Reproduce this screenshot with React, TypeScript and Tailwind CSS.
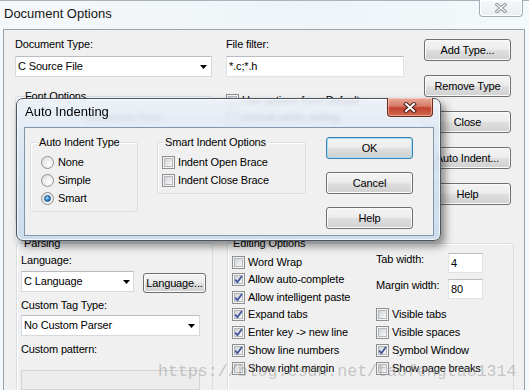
import React from "react";

const F = "font-['Liberation_Sans',Arial,sans-serif]";

function Btn({ label, w = "w-[87px]", h = "h-[22px]", def = false, className = "" }: { label: string; w?: string; h?: string; def?: boolean; className?: string }) {
  return (
    <div
      className={`${w} ${h} shrink-0 flex items-center justify-center rounded-[3px] border ${
        def ? "border-[#3c7fb1] shadow-[inset_0_0_0_1px_#a6e0f8]" : "border-[#707070] shadow-[inset_0_0_0_1px_#fbfbfb]"
      } bg-[linear-gradient(180deg,#f4f4f4_0%,#ececec_46%,#dedede_54%,#d0d0d0_100%)] text-black ${className}`}
    >
      {label}
    </div>
  );
}

function Check({ checked = false }: { checked?: boolean }) {
  return (
    <div className="relative w-[13px] h-[13px] shrink-0 border border-[#8e8f8f] bg-[#f4f4f4] p-[1px]">
      <div className="w-full h-full border border-[#b4b8bd] bg-[linear-gradient(135deg,#d0d3d7,#f8f8f8)]" />
      {checked && (
        <svg className="absolute left-0 top-0" width="11" height="11" viewBox="0 0 11 11">
          <path d="M2.2 5.6 L4.4 8.2 L8.9 2" fill="none" stroke="#4659a0" strokeWidth="1.9" strokeLinejoin="round" />
        </svg>
      )}
    </div>
  );
}

function Radio({ on = false }: { on?: boolean }) {
  return (
    <div className="w-[13px] h-[13px] shrink-0 rounded-full border border-[#8e8f8f] bg-[radial-gradient(circle_at_65%_65%,#ffffff,#d6d9dd)] flex items-center justify-center">
      {on && (
        <div className="w-[7px] h-[7px] rounded-full border border-[#1d4f86] bg-[radial-gradient(circle_at_40%_35%,#a8e0ff,#2a86d6_55%,#0d4a8a)]" />
      )}
    </div>
  );
}

function Combo({ text, w, pr = "pr-[4px]" }: { text: string; w: string; pr?: string }) {
  return (
    <div className={`${w} h-[21px] shrink-0 flex items-center justify-between border border-[#d5d9de] border-t-[#b9bdc3] bg-white pl-[2px] ${pr}`}>
      <span className="whitespace-nowrap">{text}</span>
      <svg width="7" height="4" viewBox="0 0 7 4">
        <path d="M0 0H7L3.5 4Z" fill="#000" />
      </svg>
    </div>
  );
}

function TextBox({ text, w, h = "h-[21px]", disabled = false }: { text: string; w: string; h?: string; disabled?: boolean }) {
  return (
    <div
      className={`${w} ${h} shrink-0 flex items-center border ${
        disabled ? "border-[#d3d3d3] bg-[#ececec]" : "border-[#dfe3e8] border-t-[#b9bdc3] bg-white"
      } pl-[2px]`}
    >
      {text}
    </div>
  );
}

function Group({ label, className = "", labelLeft = "left-[6px]", children }: { label: string; className?: string; labelLeft?: string; children?: React.ReactNode }) {
  return (
    <div className={`relative shrink-0 rounded-[3px] border border-[#d5dfe5] shadow-[inset_1px_1px_0_#ffffff] ${className}`}>
      <span className={`absolute -top-[7px] ${labelLeft} px-[1px] bg-[#f0f0f0] leading-[13px] whitespace-nowrap`}>{label}</span>
      {children}
    </div>
  );
}

function CheckRow({ label, checked = false, h = "h-[18px]" }: { label: string; checked?: boolean; h?: string }) {
  return (
    <div className={`${h} flex items-center gap-[3px] whitespace-nowrap`}>
      <Check checked={checked} />
      <span>{label}</span>
    </div>
  );
}

export default function App() {
  return (
    <div
      className={`relative w-[529px] h-[390px] overflow-hidden bg-[linear-gradient(90deg,#f5f8fa,#eef4f8_60%,#f4f9fb)] ${F} text-[11px] tracking-[-0.15px] text-black`}
    >
      {/* Title bar */}
      <div className="flex items-start h-[29px] border-t border-[#a9b3bd]">
        <span className="ml-[4px] mt-[5px] text-[13px] leading-[15px] tracking-normal text-[#151515]">Document Options</span>
        <div className="ml-auto mr-[6px] w-[44px] h-[17px] -mt-[1px] flex items-center justify-center rounded-b-[4px] border border-t-0 border-[#a4adb6] bg-[linear-gradient(180deg,#f6f8fa,#e9eef2)] shadow-[inset_0_0_0_1px_#ffffff]">
          <svg width="12" height="10" viewBox="0 0 12 10">
            <path d="M2 1.5 L10 8.5 M10 1.5 L2 8.5" stroke="#8c939a" strokeWidth="3.4" strokeLinecap="square" />
            <path d="M2 1.5 L10 8.5 M10 1.5 L2 8.5" stroke="#f4f6f8" strokeWidth="1.4" strokeLinecap="square" />
          </svg>
        </div>
      </div>

      {/* Main panel */}
      <div className="ml-[3px] w-[522px] h-[361px] overflow-hidden border-x border-t border-[#97a2ad] bg-[#f0f0f0]">
        {/* top section */}
        <div className="flex h-[206px] pl-[11px]">
          <div className="w-[409px] pt-[8px]">
            <div className="flex gap-[14px]">
              <div className="w-[197px]">
                <div className="leading-[13px]">Document Type:</div>
                <div className="mt-[5px]">
                  <Combo text="C Source File" w="w-[197px]" />
                </div>
              </div>
              <div className="w-[178px]">
                <div className="leading-[13px]">File filter:</div>
                <div className="mt-[5px]">
                  <TextBox text="*.c;*.h" w="w-[178px]" />
                </div>
              </div>
            </div>
            <div className="flex items-start gap-[14px]">
              <Group label="Font Options" labelLeft="left-[8px]" className="w-[197px] h-[128px] mt-[19px]">
                <div className="pl-[8px] pt-[14px] flex flex-col gap-[4px] text-[#333]">
                  <div className="pl-[60px] leading-[13px]">Use printer fonts</div>
                  <div className="flex items-center gap-[4px]">
                    <Combo text="Courier New" w="w-[150px]" />
                  </div>
                </div>
              </Group>
              <div className="w-[178px] mt-[16px] flex flex-col gap-[3px]">
                <CheckRow label="Use options from Default" h="h-[14px]" />
                <CheckRow label="Include when setting" h="h-[14px]" />
                <CheckRow label="Apply to all" h="h-[14px]" />
              </div>
            </div>
          </div>
          <div className="w-[87px] pt-[9px] flex flex-col gap-[14px]">
            <Btn label="Add Type..." />
            <Btn label="Remove Type" />
            <Btn label="Close" />
            <Btn label="Auto Indent..." />
            <Btn label="Help" />
          </div>
        </div>

        {/* bottom section */}
        <div className="flex pl-[12px] pt-[7px]">
          <Group label="Parsing" className="w-[197px] h-[160px]">
            <div className="pl-[4px] pt-[10px] flex flex-col">
              <div className="leading-[13px]">Language:</div>
              <div className="mt-[4px] flex items-start">
                <Combo text="C Language" w="w-[113px]" pr="pr-[3px]" />
                <Btn label="Language..." w="w-[63px]" h="h-[20px]" className="ml-[9px] mt-[2px]" />
              </div>
              <div className="mt-[6px] leading-[13px]">Custom Tag Type:</div>
              <div className="mt-[3px]">
                <Combo text="No Custom Parser" w="w-[179px]" />
              </div>
              <div className="mt-[7px] leading-[13px]">Custom pattern:</div>
              <div className="mt-[14px]">
                <TextBox text="" w="w-[179px]" h="h-[20px]" disabled />
              </div>
            </div>
          </Group>
          <Group label="Editing Options" labelLeft="left-[4px]" className="ml-[14px] w-[287px] h-[160px]">
            <div className="flex pt-[9px] pl-[4px]">
              <div className="w-[144px] flex flex-col">
                <CheckRow label="Word Wrap" h="h-[18px]" />
                <CheckRow label="Allow auto-complete" checked h="h-[17px]" />
                <CheckRow label="Allow intelligent paste" checked h="h-[18px]" />
                <CheckRow label="Expand tabs" checked h="h-[17px]" />
                <CheckRow label="Enter key -> new line" checked h="h-[18px]" />
                <CheckRow label="Show line numbers" checked h="h-[18px]" />
                <CheckRow label="Show right margin" h="h-[18px]" />
              </div>
              <div className="flex flex-col">
                <div className="flex items-start h-[20px]">
                  <span className="w-[72px] leading-[13px]">Tab width:</span>
                  <TextBox text="4" w="w-[35px]" h="h-[20px]" />
                </div>
                <div className="flex items-start h-[20px] mt-[6px]">
                  <span className="w-[72px] leading-[13px]">Margin width:</span>
                  <TextBox text="80" w="w-[35px]" h="h-[20px]" />
                </div>
                <div className="mt-[7px] flex flex-col">
                  <CheckRow label="Visible tabs" h="h-[17px]" />
                  <CheckRow label="Visible spaces" h="h-[18px]" />
                  <CheckRow label="Symbol Window" checked h="h-[18px]" />
                  <CheckRow label="Show page breaks" h="h-[18px]" />
                </div>
              </div>
            </div>
          </Group>
        </div>
      </div>

      {/* Auto Indenting modal */}
      <div className="absolute left-[16px] top-[98px] w-[425px] h-[143px] flex flex-col rounded-[7px] border border-[#4b5560] bg-[linear-gradient(180deg,rgba(236,242,248,0.86),rgba(214,228,242,0.88)_40%,rgba(200,218,236,0.9))] backdrop-blur-[2px] shadow-[inset_0_0_0_1px_rgba(255,255,255,0.75),4px_5px_8px_rgba(0,0,0,0.45)]">
        <div className="relative h-[28px] pl-[8px] pt-[5px]">
          <span className="text-[13px] leading-[15px] tracking-normal text-black">Auto Indenting</span>
          <div className="absolute -top-[1px] right-[7px] w-[46px] h-[19px] flex items-center justify-center rounded-b-[4px] border border-t-0 border-[#6f2a20] bg-[linear-gradient(180deg,#e9aa98_0%,#d77a68_45%,#c3432f_55%,#cf6a4f_100%)] shadow-[inset_0_0_0_1px_rgba(255,220,210,0.5)]">
            <svg width="14" height="11" viewBox="0 0 14 11">
              <path d="M3 2 L11 9 M11 2 L3 9" stroke="#4d2119" strokeWidth="4" strokeLinecap="square" />
              <path d="M3 2 L11 9 M11 2 L3 9" stroke="#ffffff" strokeWidth="2" strokeLinecap="square" />
            </svg>
          </div>
        </div>
        <div className="ml-[7px] w-[410px] h-[109px] border border-[#8196ab] bg-[#f0f0f0] flex items-start pl-[5px]">
          <Group label="Auto Indent Type" labelLeft="left-[7px]" className="mt-[14px] w-[108px] h-[70px]">
            <div className="pl-[10px] pt-[10px] flex flex-col">
              <div className="h-[18px] flex items-center gap-[4px]">
                <Radio />
                <span>None</span>
              </div>
              <div className="h-[18px] flex items-center gap-[4px]">
                <Radio />
                <span>Simple</span>
              </div>
              <div className="h-[18px] flex items-center gap-[4px]">
                <Radio on />
                <span>Smart</span>
              </div>
            </div>
          </Group>
          <Group label="Smart Indent Options" labelLeft="left-[6px]" className="mt-[14px] ml-[19px] w-[149px] h-[52px]">
            <div className="pl-[4px] pt-[10px] flex flex-col">
              <CheckRow label="Indent Open Brace" h="h-[18px]" />
              <CheckRow label="Indent Close Brace" h="h-[18px]" />
            </div>
          </Group>
          <div className="ml-[20px] mt-[9px] flex flex-col gap-[13px]">
            <Btn label="OK" def />
            <Btn label="Cancel" />
            <Btn label="Help" />
          </div>
        </div>
      </div>

      {/* watermark */}
      <div className="absolute left-[158px] top-[364px] font-['Liberation_Mono',monospace] text-[16.6px] leading-none tracking-normal text-[rgba(140,140,140,0.45)] whitespace-nowrap pointer-events-none">
        https://blog.csdn.net/taofengtao1314
      </div>
    </div>
  );
}
